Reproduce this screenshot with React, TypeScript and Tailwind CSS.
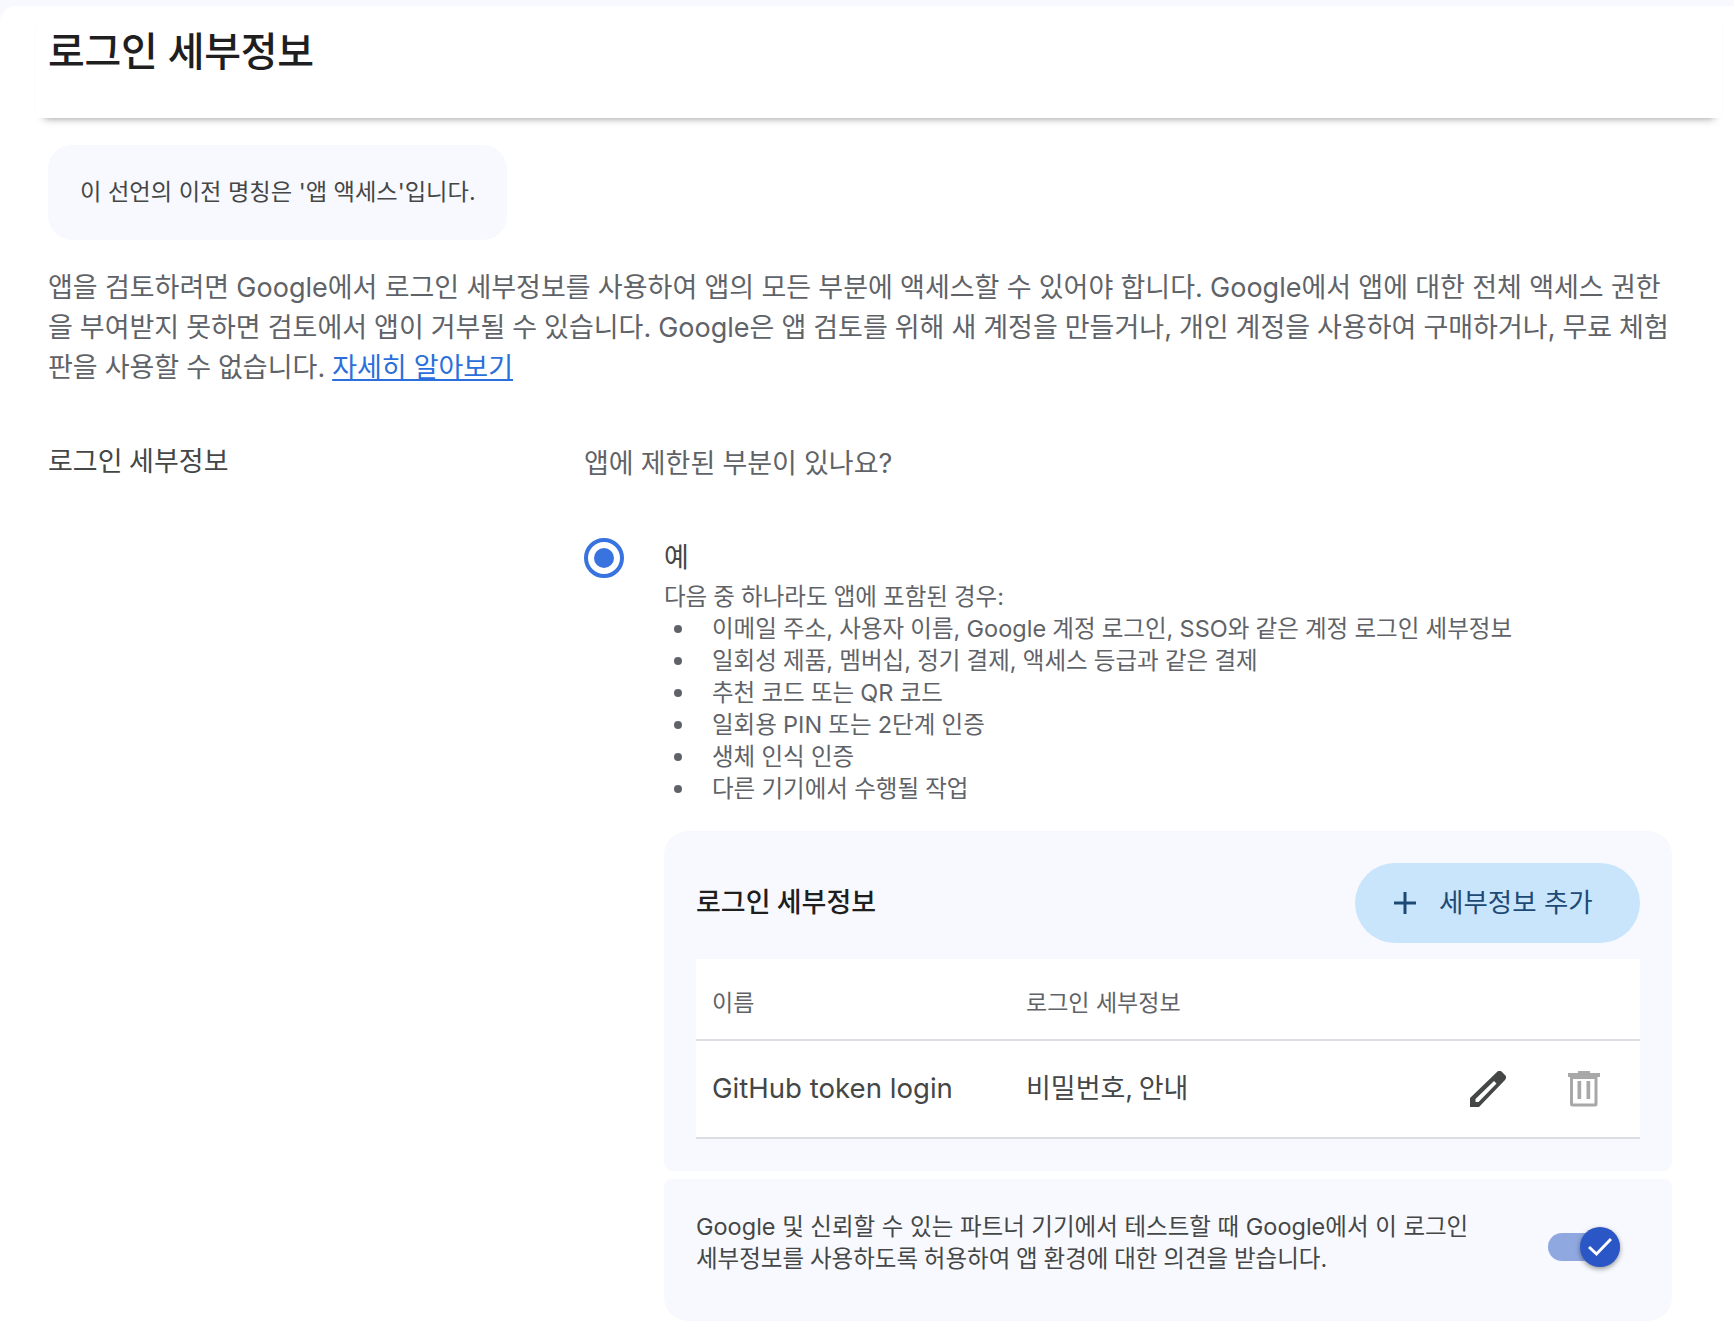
const font = "font-['Inter','Noto_Sans_CJK_KR',sans-serif]"

const bullets = [
  '이메일 주소, 사용자 이름, Google 계정 로그인, SSO와 같은 계정 로그인 세부정보',
  '일회성 제품, 멤버십, 정기 결제, 액세스 등급과 같은 결제',
  '추천 코드 또는 QR 코드',
  '일회용 PIN 또는 2단계 인증',
  '생체 인식 인증',
  '다른 기기에서 수행될 작업',
]

function PencilIcon() {
  return (
    <svg width="36" height="36" viewBox="0 0 36 36" fill="#444746">
      <path
        fillRule="evenodd"
        d="M0 36V27L27 1c1.5-1.5 3.5-1.5 5 0l3 3c1.5 1.5 1.5 3.5 0 5L9 36zM5.5 31h3L26.5 12.5 24 10 5.5 28z"
      />
    </svg>
  )
}

function TrashIcon() {
  return (
    <svg width="32" height="36" viewBox="0 0 32 36" fill="#a8a8a8">
      <path d="M10 0h12v2h10v4H0V2h10z" />
      <path d="M2 5h27.5v28a2.5 2.5 0 0 1-2.5 2.5H4.5A2.5 2.5 0 0 1 2 33zM5 8v24.5h21.5V8z" fillRule="evenodd" />
      <path d="M9.5 10h3.7v18H9.5zM18.5 10h3.7v18h-3.7z" />
    </svg>
  )
}

export default function App() {
  return (
    <div className={`${font} h-[1322px] w-[1734px] overflow-hidden bg-[#f8f9fe]`}>
      <div className="mt-[6px] h-[1316px] overflow-hidden rounded-tl-[16px] bg-white">
        <div className="ml-[36px] mr-[12px] h-[112px] bg-white pl-[12px] shadow-[0_8px_8px_-8px_rgba(0,0,0,0.45)]">
          <h1 className="pt-[20px] text-[40px] leading-[52px] font-medium tracking-[-0.3px] text-[#1f1f1f]">로그인 세부정보</h1>
        </div>

        <div className="pl-[48px] pr-[40px]">
          <div className="mt-[27px] flex h-[95px] w-[459px] items-center rounded-[24px] bg-[#f8f9fe] pl-[32px] text-[23.25px] text-[#444746]">
            이 선언의 이전 명칭은 '앱 액세스'입니다.
          </div>

          <p className="mt-[28px] text-[27px] leading-[40px] text-[#5f6368] [word-spacing:-0.6px]">
            <span className="block whitespace-nowrap [word-spacing:-0.35px]">앱을 검토하려면 Google에서 로그인 세부정보를 사용하여 앱의 모든 부분에 액세스할 수 있어야 합니다. Google에서 앱에 대한 전체 액세스 권한</span>
            <span className="block whitespace-nowrap">을 부여받지 못하면 검토에서 앱이 거부될 수 있습니다. Google은 앱 검토를 위해 새 계정을 만들거나, 개인 계정을 사용하여 구매하거나, 무료 체험</span>
            <span className="block whitespace-nowrap">판을 사용할 수 없습니다. <a className="text-[#2a6fdb] underline">자세히 알아보기</a></span>
          </p>

          <div className="mt-[54px] flex">
            <div className="w-[536px] text-[27px] leading-[40px] text-[#444746] [word-spacing:-1px]">로그인 세부정보</div>
            <div className="w-[1088px]">
              <div className="pt-[2px] text-[27px] leading-[40px] text-[#5f6368] [word-spacing:-0.5px]">앱에 제한된 부분이 있나요?</div>

              <div className="mt-[54px] flex">
                <div className="flex h-[40px] w-[40px] items-center justify-center rounded-full border-[4px] border-[#3873e0]">
                  <div className="h-[20px] w-[20px] rounded-full bg-[#3873e0]" />
                </div>
                <div className="ml-[40px] mt-[2px] text-[#444746]">
                  <div className="text-[27px] leading-[36px]">예</div>
                  <div className="mt-[5px] text-[23.5px] leading-[32px] text-[#5f6368] [word-spacing:-0.5px]">다음 중 하나라도 앱에 포함된 경우:</div>
                  <ul className="text-[23.5px] leading-[32px] text-[#5f6368] [word-spacing:-0.4px]">
                    {bullets.map((b) => (
                      <li key={b} className="flex items-center whitespace-nowrap">
                        <span className="ml-[10px] mr-[30px] h-[8px] w-[8px] rounded-full bg-[#5f6368]" />
                        {b}
                      </li>
                    ))}
                  </ul>
                </div>
              </div>

              <div className="ml-[80px] mt-[26px] w-[1008px]">
                <div className="h-[340px] rounded-t-[24px] rounded-b-[8px] bg-[#f8f9fe] px-[32px] pt-[32px]">
                  <div className="flex items-center justify-between">
                    <div className="text-[27px] leading-[40px] font-medium text-[#1f1f1f] [word-spacing:-1px]">로그인 세부정보</div>
                    <button className="flex h-[80px] w-[285px] items-center rounded-full bg-[#c9e5fc] pl-[39px] text-[26.5px] text-[#1d4a75]">
                      <svg width="22" height="22" viewBox="0 0 22 22" stroke="#1d4a75" strokeWidth="3">
                        <path d="M11 0v22M0 11h22" />
                      </svg>
                      <span className="ml-[23px]">세부정보 추가</span>
                    </button>
                  </div>
                  <div className="mt-[16px] bg-white">
                    <div className="flex h-[82px] items-center border-b-2 border-[#dddde3] pl-[16px] pt-[8px] text-[23px] text-[#5f6368]">
                      <span className="w-[314px]">이름</span>
                      <span>로그인 세부정보</span>
                    </div>
                    <div className="flex h-[98px] items-center border-b-2 border-[#dddde3] pl-[16px] text-[27px] text-[#444746]">
                      <span className="w-[314px] text-[27.6px]">GitHub token login</span>
                      <span className="[word-spacing:-2px]">비밀번호, 안내</span>
                      <div className="ml-auto mr-[40px] flex items-center gap-[62px]">
                        <PencilIcon />
                        <TrashIcon />
                      </div>
                    </div>
                  </div>
                </div>

                <div className="mt-[8px] flex h-[142px] items-center rounded-t-[8px] rounded-b-[24px] bg-[#f8f9fe] px-[32px]">
                  <div className="w-[780px] pb-[15px] text-[23.5px] leading-[32px] text-[#444746]">
                    <span className="block whitespace-nowrap">Google 및 신뢰할 수 있는 파트너 기기에서 테스트할 때 Google에서 이 로그인</span>
                    <span className="block whitespace-nowrap [word-spacing:-0.8px]">세부정보를 사용하도록 허용하여 앱 환경에 대한 의견을 받습니다.</span>
                  </div>
                  <div className="relative ml-[72px] mb-[6px] h-[28px] w-[72px] rounded-full bg-[#8fa8e0]">
                    <div className="absolute right-0 top-[-6px] flex h-[40px] w-[40px] items-center justify-center rounded-full bg-[#2a56c6] shadow-[0_2px_5px_rgba(0,0,0,0.4)]">
                      <svg width="24" height="24" viewBox="0 0 24 24" fill="none" stroke="white" strokeWidth="3">
                        <path d="M1 12l7.5 7L23 4" />
                      </svg>
                    </div>
                  </div>
                </div>
              </div>
            </div>
          </div>
        </div>
      </div>
    </div>
  )
}
